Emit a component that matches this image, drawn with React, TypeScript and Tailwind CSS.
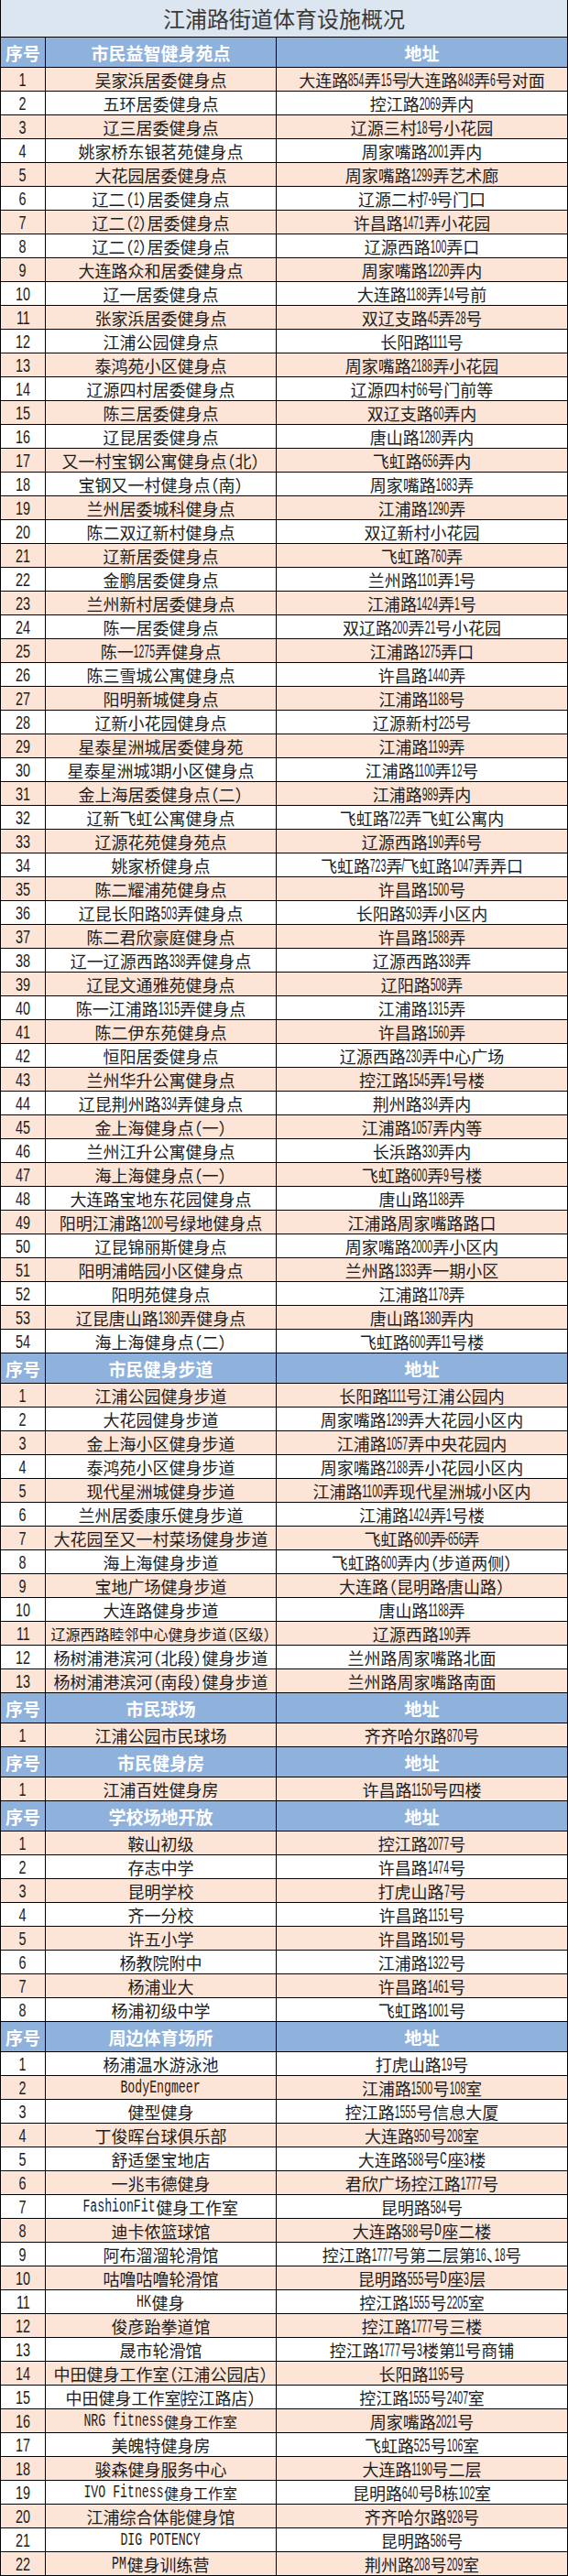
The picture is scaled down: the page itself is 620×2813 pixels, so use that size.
import React from "react"

type Row = [string, string]

interface Section {
    title: string
    rows: Row[]
    // the last block starts its stripes on the second row
    shadeEven?: boolean
}

const sections: Section[] = [
    {
        title: "市民益智健身苑点",
        rows: [
            ["吴家浜居委健身点", "大连路854弄15号/大连路848弄6号对面"],
            ["五环居委健身点", "控江路2069弄内"],
            ["辽三居委健身点", "辽源三村18号小花园"],
            ["姚家桥东银茗苑健身点", "周家嘴路2001弄内"],
            ["大花园居委健身点", "周家嘴路1299弄艺术廊"],
            ["辽二（1）居委健身点", "辽源二村7-9号门口"],
            ["辽二（2）居委健身点", "许昌路1471弄小花园"],
            ["辽二（2）居委健身点", "辽源西路100弄口"],
            ["大连路众和居委健身点", "周家嘴路1220弄内"],
            ["辽一居委健身点", "大连路1188弄14号前"],
            ["张家浜居委健身点", "双辽支路45弄28号"],
            ["江浦公园健身点", "长阳路1111号"],
            ["泰鸿苑小区健身点", "周家嘴路2188弄小花园"],
            ["辽源四村居委健身点", "辽源四村66号门前等"],
            ["陈三居委健身点", "双辽支路60弄内"],
            ["辽昆居委健身点", "唐山路1280弄内"],
            ["又一村宝钢公寓健身点（北）", "飞虹路656弄内"],
            ["宝钢又一村健身点（南）", "周家嘴路1683弄"],
            ["兰州居委城科健身点", "江浦路1290弄"],
            ["陈二双辽新村健身点", "双辽新村小花园"],
            ["辽新居委健身点", "飞虹路760弄"],
            ["金鹏居委健身点", "兰州路1101弄1号"],
            ["兰州新村居委健身点", "江浦路1424弄1号"],
            ["陈一居委健身点", "双辽路200弄21号小花园"],
            ["陈一1275弄健身点", "江浦路1275弄口"],
            ["陈三雪城公寓健身点", "许昌路1440弄"],
            ["阳明新城健身点", "江浦路1188号"],
            ["辽新小花园健身点", "辽源新村225号"],
            ["星泰星洲城居委健身苑", "江浦路1199弄"],
            ["星泰星洲城3期小区健身点", "江浦路1100弄12号"],
            ["金上海居委健身点（二）", "江浦路989弄内"],
            ["辽新飞虹公寓健身点", "飞虹路722弄飞虹公寓内"],
            ["辽源花苑健身苑点", "辽源西路190弄6号"],
            ["姚家桥健身点", "飞虹路723弄/飞虹路1047弄弄口"],
            ["陈二耀浦苑健身点", "许昌路1500号"],
            ["辽昆长阳路503弄健身点", "长阳路503弄小区内"],
            ["陈二君欣豪庭健身点", "许昌路1588弄"],
            ["辽一辽源西路338弄健身点", "辽源西路338弄"],
            ["辽昆文通雅苑健身点", "辽阳路508弄"],
            ["陈一江浦路1315弄健身点", "江浦路1315弄"],
            ["陈二伊东苑健身点", "许昌路1560弄"],
            ["恒阳居委健身点", "辽源西路230弄中心广场"],
            ["兰州华升公寓健身点", "控江路1545弄1号楼"],
            ["辽昆荆州路334弄健身点", "荆州路334弄内"],
            ["金上海健身点（一）", "江浦路1057弄内等"],
            ["兰州江升公寓健身点", "长浜路330弄内"],
            ["海上海健身点（一）", "飞虹路600弄9号楼"],
            ["大连路宝地东花园健身点", "唐山路1188弄"],
            ["阳明江浦路1200号绿地健身点", "江浦路周家嘴路路口"],
            ["辽昆锦丽斯健身点", "周家嘴路2000弄小区内"],
            ["阳明浦皓园小区健身点", "兰州路1333弄一期小区"],
            ["阳明苑健身点", "江浦路1178弄"],
            ["辽昆唐山路1380弄健身点", "唐山路1380弄内"],
            ["海上海健身点（二）", "飞虹路600弄11号楼"],
        ],
    },
    {
        title: "市民健身步道",
        rows: [
            ["江浦公园健身步道", "长阳路1111号江浦公园内"],
            ["大花园健身步道", "周家嘴路1299弄大花园小区内"],
            ["金上海小区健身步道", "江浦路1057弄中央花园内"],
            ["泰鸿苑小区健身步道", "周家嘴路2188弄小花园小区内"],
            ["现代星洲城健身步道", "江浦路1100弄现代星洲城小区内"],
            ["兰州居委康乐健身步道", "江浦路1424弄1号楼"],
            ["大花园至又一村菜场健身步道", "飞虹路600弄-656弄"],
            ["海上海健身步道", "飞虹路600弄内（步道两侧）"],
            ["宝地广场健身步道", "大连路（昆明路-唐山路）"],
            ["大连路健身步道", "唐山路1188弄"],
            ["辽源西路睦邻中心健身步道（区级）", "辽源西路190弄"],
            ["杨树浦港滨河（北段）健身步道", "兰州路周家嘴路北面"],
            ["杨树浦港滨河（南段）健身步道", "兰州路周家嘴路南面"],
        ],
    },
    {
        title: "市民球场",
        rows: [["江浦公园市民球场", "齐齐哈尔路870号"]],
    },
    {
        title: "市民健身房",
        rows: [["江浦百姓健身房", "许昌路1150号四楼"]],
    },
    {
        title: "学校场地开放",
        rows: [
            ["鞍山初级", "控江路2077号"],
            ["存志中学", "许昌路1474号"],
            ["昆明学校", "打虎山路7号"],
            ["齐一分校", "许昌路1151号"],
            ["许五小学", "许昌路1501号"],
            ["杨教院附中", "江浦路1322号"],
            ["杨浦业大", "许昌路1461号"],
            ["杨浦初级中学", "飞虹路1001号"],
        ],
    },
    {
        title: "周边体育场所",
        shadeEven: true,
        rows: [
            ["杨浦温水游泳池", "打虎山路19号"],
            ["BodyEngmeer", "江浦路1500号108室"],
            ["健型健身", "控江路1555号信息大厦"],
            ["丁俊晖台球俱乐部", "大连路950号208室"],
            ["舒适堡宝地店", "大连路588号C座3楼"],
            ["一兆韦德健身", "君欣广场控江路1777号"],
            ["FashionFit健身工作室", "昆明路584号"],
            ["迪卡侬篮球馆", "大连路588号D座二楼"],
            ["阿布溜溜轮滑馆", "控江路1777号第二层第16、18号"],
            ["咕噜咕噜轮滑馆", "昆明路555号D座3层"],
            ["HK健身", "控江路1555号2205室"],
            ["俊彦跆拳道馆", "控江路1777号三楼"],
            ["晟市轮滑馆", "控江路1777号3楼第11号商铺"],
            ["中田健身工作室（江浦公园店）", "长阳路1195号"],
            ["中田健身工作室(控江路店）", "控江路1555号2407室"],
            ["NRG fitness健身工作室", "周家嘴路2021号"],
            ["美魄特健身房", "飞虹路525号106室"],
            ["骏森健身服务中心", "大连路1190号二层"],
            ["IVO Fitness健身工作室", "昆明路640号B栋102室"],
            ["江浦综合体能健身馆", "齐齐哈尔路928号"],
            ["DIG POTENCY", "昆明路586号"],
            ["PM健身训练营", "荆州路208号209室"],
        ],
    },
]

const asciiRun = /([\x20-\x7e]+)/

// Latin and digits in the source sheet are tall and very narrow,
// so set them a bit larger, squeeze them and hand back the room
function Txt({ s }: { s: string }) {
    return (
        <>
            {s.split(asciiRun).filter(Boolean).map((part, i) => {
                if (!asciiRun.test(part)) return <span key={i}>{part}</span>
                const letters = /[A-Za-z]/.test(part)
                const width = part.length * (letters ? 12 : 11.7)
                const squeeze = letters ? 0.66 : 0.5
                return (
                    <span
                        key={i}
                        className={
                            letters
                                ? "inline-block scale-x-[0.66] text-[20px] font-['Liberation_Mono',monospace]"
                                : "inline-block scale-x-[0.5] text-[21px] font-['Liberation_Sans',sans-serif]"
                        }
                        style={{ marginInline: -(width * (1 - squeeze)) / 2 }}
                    >
                        {part}
                    </span>
                )
            })}
        </>
    )
}

function HeaderRow({ title }: { title: string }) {
    return (
        <div className="grid grid-cols-[49px_252px_1fr] h-[33px] border-b border-black bg-[#8fb2dc] text-[19px] font-bold text-white">
            <div className="flex items-center justify-center border-r border-black">序号</div>
            <div className="flex items-center justify-center border-r border-black">{title}</div>
            <div className="flex items-center justify-center">地址</div>
        </div>
    )
}

function DataRow({ no, row, shaded }: { no: number; row: Row; shaded: boolean }) {
    const [name, addr] = row
    return (
        <div
            className={`grid grid-cols-[49px_252px_1fr] h-[26px] border-b border-black text-[#1c1c1c] ${
                shaded ? "bg-[#fce4d6]" : "bg-white"
            }`}
        >
            <div className="flex items-center justify-center border-r border-black text-[20px] font-['Liberation_Sans',sans-serif]">
                <span className="inline-block scale-x-[0.72]">{no}</span>
            </div>
            <div
                className={`flex items-center justify-center whitespace-nowrap border-r border-black ${
                    name.length >= 16 ? "text-[16px]" : "text-[18px]"
                }`}
            >
                <Txt s={name} />
            </div>
            <div className="flex items-center justify-center whitespace-nowrap">
                <Txt s={addr} />
            </div>
        </div>
    )
}

export default function App() {
    return (
        <div className="w-[620px] border-x border-black bg-white text-[18px] leading-none font-['Noto_Sans_CJK_SC',sans-serif] [font-feature-settings:'halt']">
            <div className="flex h-[41px] items-center justify-center border-b border-black bg-[#dce6f1] text-[24px] text-[#3a3a3a]">
                江浦路街道体育设施概况
            </div>
            {sections.map((sec) => (
                <div key={sec.title}>
                    <HeaderRow title={sec.title} />
                    {sec.rows.map((row, i) => (
                        <DataRow
                            key={i}
                            no={i + 1}
                            row={row}
                            shaded={sec.shadeEven ? i % 2 === 1 : i % 2 === 0}
                        />
                    ))}
                </div>
            ))}
        </div>
    )
}
